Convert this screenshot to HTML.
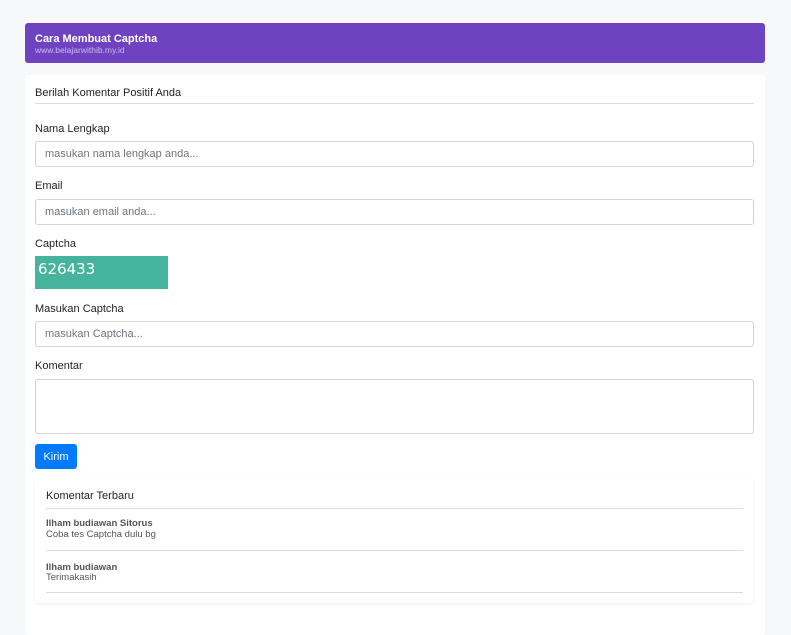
<!DOCTYPE html>
<html><head><style>
*{box-sizing:border-box;margin:0;padding:0}
body{width:791px;height:624px;background:#f7f8fa;font-family:"Liberation Sans",sans-serif;color:#212529;position:relative;overflow:hidden;font-size:11px}
.a{position:absolute}
.hdr{left:25px;top:23px;width:740px;height:40px;background:#6f42c1;border-radius:3px}
.card{left:25px;top:75px;width:740px;height:560px;background:#fff;border-radius:3px}
.hr{height:1px;background:#dcdcdc}
.inp{left:35px;width:719px;border:1px solid #ced4da;border-radius:3px;background:#fff;color:#6c757d;padding-left:9px;font-size:11px;line-height:24px}
.lbl{left:35px;font-size:11px}
.inner{left:35px;top:479px;width:718px;height:124px;background:#fff;border-radius:3px;box-shadow:0 1px 3px rgba(0,0,0,.08)}
.b{font-weight:bold;color:#555;font-size:9.5px}
.s{color:#555;font-size:9.5px}
</style></head><body>
<div class="a hdr"></div>
<div class="a" style="left:35px;top:33px;color:#fff;font-weight:bold;font-size:11px">Cara Membuat Captcha</div>
<div class="a" style="left:35px;top:45px;color:#cbb8ec;font-size:8.5px">www.belajarwithib.my.id</div>
<div class="a card"></div>
<div class="a" style="left:35px;top:87px;font-size:11px">Berilah Komentar Positif Anda</div>
<div class="a hr" style="left:35px;top:103px;width:719px"></div>
<div class="a lbl" style="top:123px">Nama Lengkap</div>
<div class="a inp" style="top:141px;height:26px">masukan nama lengkap anda...</div>
<div class="a lbl" style="top:180px">Email</div>
<div class="a inp" style="top:199px;height:26px">masukan email anda...</div>
<div class="a lbl" style="top:238px">Captcha</div>
<div class="a" style="left:35px;top:256px;width:133px;height:33px;background:#45b39d;color:#fff;font-size:15px;padding:4px 0 0 3px;font-family:'DejaVu Sans',sans-serif">626433</div>
<div class="a lbl" style="top:303px">Masukan Captcha</div>
<div class="a inp" style="top:321px;height:26px">masukan Captcha...</div>
<div class="a lbl" style="top:360px">Komentar</div>
<div class="a inp" style="top:379px;height:55px"></div>
<div class="a" style="left:35px;top:444px;width:42px;height:25px;background:#007bff;border-radius:3px;color:#fff;font-size:11px;line-height:26px;text-align:center">Kirim</div>
<div class="a inner"></div>
<div class="a" style="left:46px;top:490px;font-size:11px">Komentar Terbaru</div>
<div class="a hr" style="left:46px;top:508px;width:697px"></div>
<div class="a b" style="left:46px;top:518px">Ilham budiawan Sitorus</div>
<div class="a s" style="left:46px;top:529px">Coba tes Captcha dulu bg</div>
<div class="a hr" style="left:46px;top:550px;width:697px"></div>
<div class="a b" style="left:46px;top:562px">Ilham budiawan</div>
<div class="a s" style="left:46px;top:572px">Terimakasih</div>
<div class="a hr" style="left:46px;top:592px;width:697px"></div>
</body></html>
